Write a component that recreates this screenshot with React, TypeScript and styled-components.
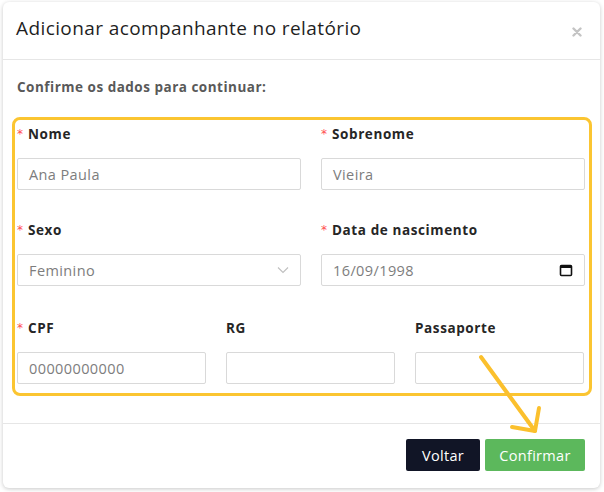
import React from "react";
import styled, { createGlobalStyle } from "styled-components";

const Global = createGlobalStyle`
  html, body { margin: 0; padding: 0; background: #ffffff; }
  body { font-family: "Open Sans", "Noto Sans", sans-serif; }
  * { box-sizing: border-box; }
`;

const Page = styled.div`
  position: relative;
  width: 604px;
  height: 492px;
  padding: 2px 4px 4px 3px;
`;

const Card = styled.div`
  width: 597px;
  height: 486px;
  background: #fff;
  border-radius: 6px;
  box-shadow: 0 1px 4px rgba(0, 0, 0, 0.22);
  display: flex;
  flex-direction: column;
`;

const Header = styled.div`
  height: 58px;
  padding: 0 18px 0 13px;
  display: flex;
  align-items: center;
  justify-content: space-between;
  border-bottom: 1px solid #e6e6e6;
`;

const Title = styled.h1`
  margin: 0;
  margin-top: -5px;
  font-size: 19px;
  font-weight: 400;
  color: #1f1f1f;
  letter-spacing: 0.4px;
`;

const Close = styled.svg`
  margin-top: 2px;
`;

const Body = styled.div`
  flex: 1;
  padding: 17px 8px 0 9px;
  display: flex;
  flex-direction: column;
`;

const Intro = styled.p`
  margin: 0 0 0 5px;
  height: 20px;
  line-height: 20px;
  font-size: 13.5px;
  font-weight: 700;
  letter-spacing: 0.5px;
  color: #595959;
`;

const Highlight = styled.div`
  margin-top: 20px;
  width: 580px;
  border: 3px solid #fbc531;
  border-radius: 8px;
  padding: 4px 4px 9px 2px;
  display: flex;
  flex-direction: column;
  gap: 30px;
`;

const Row = styled.div<{ $cols: string; $shift?: number }>`
  display: grid;
  grid-template-columns: ${(p) => p.$cols};
  column-gap: 20px;
  margin-top: ${(p) => p.$shift ?? 0}px;
`;

const Field = styled.div`
  display: flex;
  flex-direction: column;
  gap: 14px;
`;

const Label = styled.label`
  height: 20px;
  line-height: 20px;
  font-size: 13.5px;
  font-weight: 700;
  letter-spacing: 0.6px;
  color: #262626;
  display: flex;
  align-items: center;
`;

const Star = styled.span`
  color: #ff4d4f;
  font-size: 12px;
  font-weight: 400;
  margin-right: 5px;
  letter-spacing: 0;
  font-family: "DejaVu Sans", sans-serif;
`;

const Box = styled.div`
  height: 32px;
  border: 1px solid #d9d9d9;
  border-radius: 2px;
  background: #fff;
  padding: 0 11px;
  display: flex;
  align-items: center;
  justify-content: space-between;
  font-size: 14.5px;
  letter-spacing: 0.4px;
  color: #7d7d7d;
`;

const Footer = styled.div`
  height: 65px;
  border-top: 1px solid #e6e6e6;
  padding: 15px 15px 0 0;
  display: flex;
  justify-content: flex-end;
  align-items: flex-start;
  gap: 5px;
`;

const Button = styled.button<{ $variant: "dark" | "green"; $w: number }>`
  width: ${(p) => p.$w}px;
  height: 32px;
  border: none;
  border-radius: 2px;
  font-family: inherit;
  font-size: 14.5px;
  letter-spacing: 0.3px;
  font-weight: 500;
  color: #fff;
  background: ${(p) => (p.$variant === "dark" ? "#111526" : "#5cb85c")};
  cursor: pointer;
`;

const Arrow = styled.svg`
  position: absolute;
  left: 0;
  top: 0;
  pointer-events: none;
`;

const Chevron = () => (
  <svg width="12" height="8" viewBox="0 0 12 8">
    <path d="M1 1.5 L6 6.5 L11 1.5" fill="none" stroke="#bfbfbf" strokeWidth="1.1" />
  </svg>
);

const Calendar = () => (
  <svg width="14" height="14" viewBox="0 0 14 14">
    <rect x="1.5" y="2.5" width="11" height="10" rx="1" fill="none" stroke="#111" strokeWidth="1.6" />
    <rect x="1.5" y="2.5" width="11" height="2.5" fill="#111" />
  </svg>
);

const FormField = ({ label, required, children }: { label: string; required?: boolean; children?: React.ReactNode }) => (
  <Field>
    <Label>
      {required && <Star>*</Star>}
      {label}
    </Label>
    <Box>{children}</Box>
  </Field>
);

export default function App() {
  return (
    <Page>
      <Global />
      <Card>
        <Header>
          <Title>Adicionar acompanhante no relatório</Title>
          <Close width="10" height="10" viewBox="0 0 10 10">
            <path d="M1.5 1.5 L8.5 8.5 M8.5 1.5 L1.5 8.5" stroke="#c4c4c4" strokeWidth="2.4" strokeLinecap="round" />
          </Close>
        </Header>
        <Body>
          <Intro>Confirme os dados para continuar:</Intro>
          <Highlight>
            <Row $cols="284px 264px">
              <FormField label="Nome" required>Ana Paula</FormField>
              <FormField label="Sobrenome" required>Vieira</FormField>
            </Row>
            <Row $cols="284px 264px">
              <FormField label="Sexo" required>
                Feminino
                <Chevron />
              </FormField>
              <FormField label="Data de nascimento" required>
                <span>16/09/1998</span>
                <Calendar />
              </FormField>
            </Row>
            <Row $cols="189px 169px 169px" $shift={2}>
              <FormField label="CPF" required>00000000000</FormField>
              <FormField label="RG" />
              <FormField label="Passaporte" />
            </Row>
          </Highlight>
        </Body>
        <Footer>
          <Button $variant="dark" $w={74}>Voltar</Button>
          <Button $variant="green" $w={100}>Confirmar</Button>
        </Footer>
      </Card>
      <Arrow width="604" height="492" viewBox="0 0 604 492">
        <g fill="none" stroke="#fbc02d" strokeWidth="4" strokeLinecap="round" strokeLinejoin="round">
          <path d="M481 357 L535 431" />
          <path d="M539 408 L535 431 L512 427" />
        </g>
      </Arrow>
    </Page>
  );
}
